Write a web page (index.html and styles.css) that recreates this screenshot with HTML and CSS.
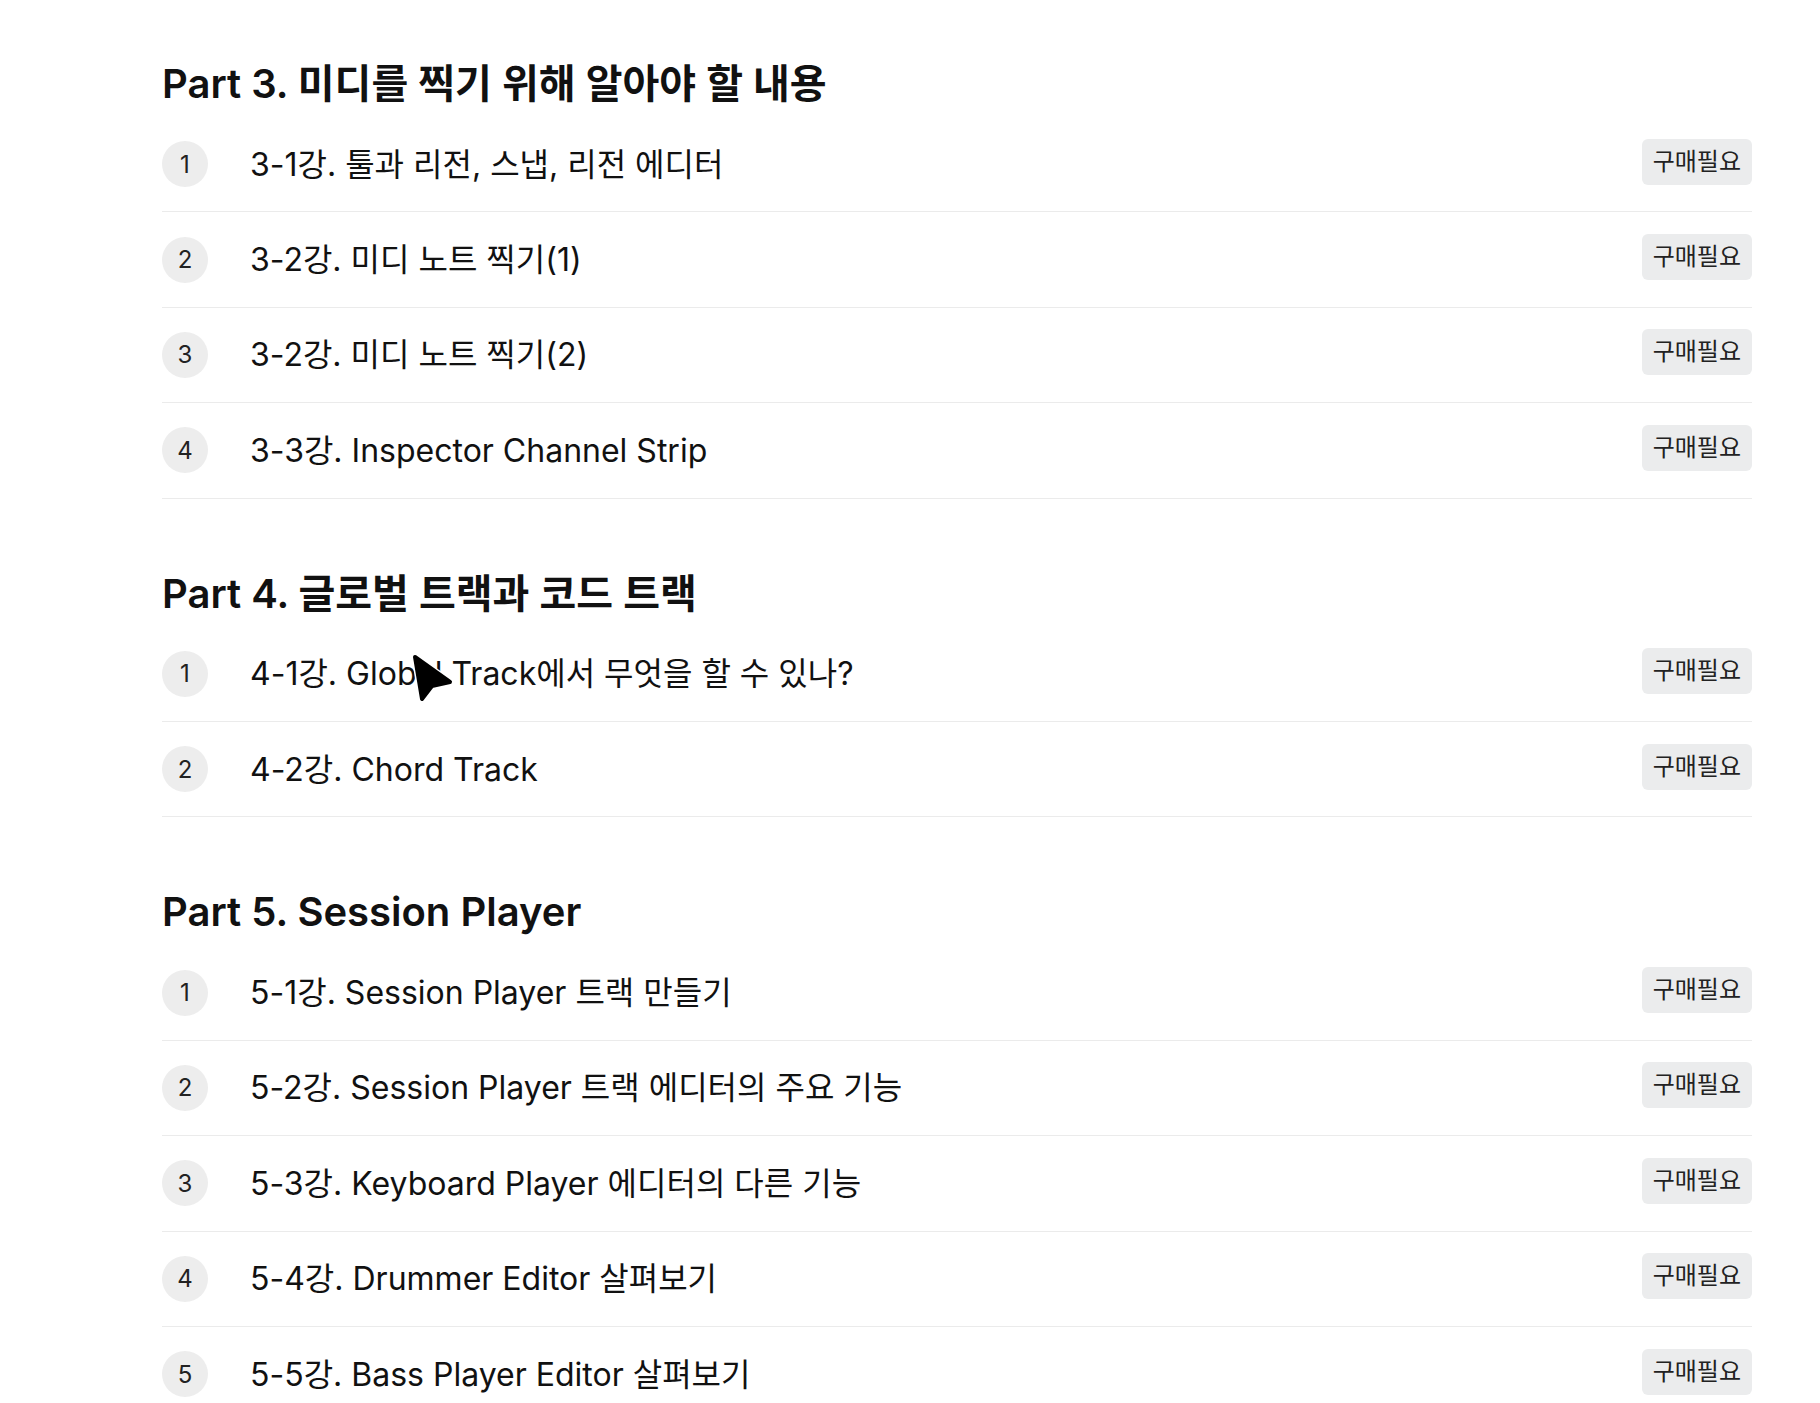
FILE: index.html
```html
<!DOCTYPE html>
<html lang="ko">
<head>
    <meta charset="UTF-8">
    <meta name="viewport" content="width=device-width, initial-scale=1.0">
    <title>커리큘럼</title>
    <link rel="stylesheet" href="styles.css">
</head>
<body>
    <div class="curriculum">
        <section class="curriculum-part">
            <h2 class="part-title">Part 3. 미디를 찍기 위해 알아야 할 내용</h2>
            <ul class="lesson-list">
                <li class="lesson"><span class="lesson-num">1</span><span class="lesson-title">3-1강. 툴과 리전, 스냅, 리전 에디터</span><span class="lesson-badge">구매필요</span></li>
                <li class="lesson"><span class="lesson-num">2</span><span class="lesson-title">3-2강. 미디 노트 찍기(1)</span><span class="lesson-badge">구매필요</span></li>
                <li class="lesson"><span class="lesson-num">3</span><span class="lesson-title">3-2강. 미디 노트 찍기(2)</span><span class="lesson-badge">구매필요</span></li>
                <li class="lesson"><span class="lesson-num">4</span><span class="lesson-title">3-3강. Inspector Channel Strip</span><span class="lesson-badge">구매필요</span></li>
            </ul>
        </section>

        <section class="curriculum-part">
            <h2 class="part-title">Part 4. 글로벌 트랙과 코드 트랙</h2>
            <ul class="lesson-list">
                <li class="lesson"><span class="lesson-num">1</span><span class="lesson-title">4-1강. Global Track에서 무엇을 할 수 있나?</span><span class="lesson-badge">구매필요</span></li>
                <li class="lesson"><span class="lesson-num">2</span><span class="lesson-title">4-2강. Chord Track</span><span class="lesson-badge">구매필요</span></li>
            </ul>
        </section>

        <section class="curriculum-part">
            <h2 class="part-title">Part 5. Session Player</h2>
            <ul class="lesson-list">
                <li class="lesson"><span class="lesson-num">1</span><span class="lesson-title">5-1강. Session Player 트랙 만들기</span><span class="lesson-badge">구매필요</span></li>
                <li class="lesson"><span class="lesson-num">2</span><span class="lesson-title">5-2강. Session Player 트랙 에디터의 주요 기능</span><span class="lesson-badge">구매필요</span></li>
                <li class="lesson"><span class="lesson-num">3</span><span class="lesson-title">5-3강. Keyboard Player 에디터의 다른 기능</span><span class="lesson-badge">구매필요</span></li>
                <li class="lesson"><span class="lesson-num">4</span><span class="lesson-title">5-4강. Drummer Editor 살펴보기</span><span class="lesson-badge">구매필요</span></li>
                <li class="lesson"><span class="lesson-num">5</span><span class="lesson-title">5-5강. Bass Player Editor 살펴보기</span><span class="lesson-badge">구매필요</span></li>
            </ul>
        </section>
    </div>

    <!-- mouse pointer captured in the screenshot -->
    <svg class="mouse-pointer" width="46" height="52" viewBox="0 0 46 52">
        <path d="M6 4 L41 29 L23 33 L13 46 Z" fill="none" stroke="#fff" stroke-width="7" stroke-linejoin="round"/>
        <path d="M6 4 L41 29 L23 33 L13 46 Z" fill="#000" stroke="#000" stroke-width="4" stroke-linejoin="round"/>
    </svg>
</body>
</html>
```

FILE: styles.css
```css
body {
    margin: 0;
    position: relative;
    background: #fff;
    color: #111;
    font-family: Inter, "Noto Sans CJK KR", sans-serif;
}

.curriculum {
    width: 1590px;
    padding: 59px 0 0 162px;
}

.curriculum-part + .curriculum-part {
    margin-top: 70px;
}

.part-title {
    margin: 0 0 8px;
    font-size: 40px;
    line-height: 50px;
    font-weight: 600;
}

.lesson-list {
    list-style: none;
    margin: 0;
    padding: 0;
}

.lesson {
    display: flex;
    align-items: center;
    height: 95.4px;
    box-sizing: border-box;
    border-bottom: 1px solid #ebebeb;
}

.lesson-num {
    display: flex;
    align-items: center;
    justify-content: center;
    flex: none;
    width: 46px;
    height: 46px;
    margin-right: 42px;
    border-radius: 50%;
    background-color: #ededed;
    font-size: 24px;
    color: #222;
}

.lesson-title {
    flex: 1;
    font-size: 32px;
    line-height: 47px;
}

.lesson-badge {
    flex: none;
    height: 46px;
    margin-bottom: 5px;
    padding: 0 11px;
    border-radius: 6px;
    background-color: #ebeced;
    font-size: 24px;
    line-height: 46px;
    color: #222;
}

.mouse-pointer {
    position: absolute;
    left: 409px;
    top: 653px;
}
```
